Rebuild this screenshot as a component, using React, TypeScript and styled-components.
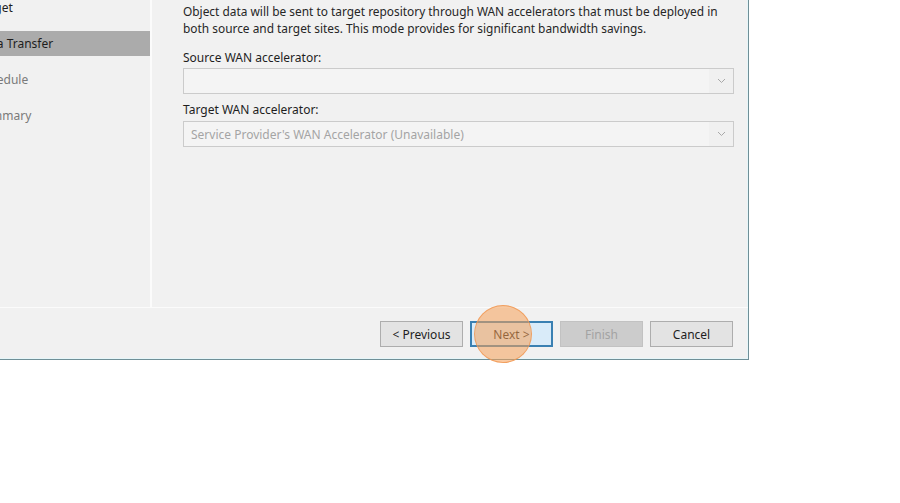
import React from "react";
import styled, { createGlobalStyle } from "styled-components";

const Global = createGlobalStyle`
  html, body { margin: 0; padding: 0; background: #ffffff; }
  body { font-family: "Noto Sans", "Segoe UI", "Liberation Sans", sans-serif; }
  #root { width: 900px; height: 503px; overflow: hidden; }
`;

const Viewport = styled.div`
  width: 900px;
  height: 503px;
  overflow: hidden;
  background: #ffffff;
`;

const Dialog = styled.div`
  margin-left: -30px;
  margin-top: -40px;
  width: 778px;
  height: 399px;
  background: #f1f1f1;
  border-right: 1px solid #6f8f97;
  border-bottom: 1px solid #6f8f97;
  box-shadow: inset -1px -1px 0 #e6f6f9;
  display: flex;
  flex-direction: column;
  font-size: 12px;
  color: #1e1e1e;
`;

const Body = styled.div`
  flex: 1;
  display: flex;
  border-bottom: 1px solid #fbfbfb;
`;

const Nav = styled.div`
  width: 180px;
  padding-top: 35px;
  border-right: 2px solid #fbfbfb;
  display: flex;
  flex-direction: column;
`;

const NavItem = styled.div<{ $active?: boolean; $pending?: boolean }>`
  height: 25px;
  margin-bottom: 11px;
  display: flex;
  align-items: center;
  padding-left: 7px;
  background: ${(p) => (p.$active ? "#ababab" : "transparent")};
  color: ${(p) => (p.$pending ? "#7a7a7a" : "#1e1e1e")};
  font-size: 12px;
`;

const Content = styled.div`
  flex: 1;
  padding: 43px 14px 0 31px;
  display: flex;
  flex-direction: column;
`;

const Description = styled.p`
  margin: 0;
  line-height: 17px;
  font-size: 11.9px;
  color: #262626;
`;

const FieldLabel = styled.div<{ $top: number }>`
  margin-top: ${(p) => p.$top}px;
  line-height: 16px;
  height: 16px;
  font-size: 12px;
  color: #1e1e1e;
`;

const Combo = styled.div<{ $gap: number }>`
  margin-top: ${(p) => p.$gap}px;
  height: 24px;
  border: 1px solid #cbcbcb;
  background: #f4f4f4;
  display: flex;
  align-items: center;
`;

const ComboText = styled.span`
  flex: 1;
  padding-left: 7px;
  color: #a4a4a4;
  font-size: 12px;
  white-space: nowrap;
`;

const ComboArrow = styled.span`
  width: 24px;
  height: 100%;
  display: flex;
  align-items: center;
  justify-content: center;
  background: #f0f0f0;
`;

const Footer = styled.div`
  height: 51px;
  box-sizing: border-box;
  display: flex;
  align-items: flex-start;
  justify-content: flex-end;
  gap: 7px;
  padding: 13px 15px 0 0;
  position: relative;
`;

const Button = styled.div<{ $variant?: "default" | "primary" | "disabled" }>`
  width: 81px;
  height: 24px;
  box-sizing: content-box;
  display: flex;
  align-items: center;
  justify-content: center;
  font-size: 12px;
  border: 1px solid
    ${(p) =>
      p.$variant === "primary" ? "#3a80b2" : p.$variant === "disabled" ? "#c2c2c2" : "#adadad"};
  background: ${(p) =>
    p.$variant === "primary" ? "#d9ebf9" : p.$variant === "disabled" ? "#cccccc" : "#e3e3e3"};
  color: ${(p) => (p.$variant === "disabled" ? "#a3a3a3" : "#1e1e1e")};
  ${(p) => (p.$variant === "primary" ? "box-shadow: inset 0 0 0 1px #3a80b2;" : "")}
`;

const ClickMarker = styled.div`
  position: absolute;
  left: 504px;
  top: -3px;
  width: 56px;
  height: 56px;
  border-radius: 50%;
  background: rgba(245, 160, 88, 0.55);
  border: 1.5px solid rgba(240, 150, 80, 0.8);
  pointer-events: none;
`;

const Chevron = () => (
  <svg width="9" height="6" viewBox="0 0 9 6">
    <path d="M1 1 L4.5 4.5 L8 1" fill="none" stroke="#a8a8a8" strokeWidth="1" />
  </svg>
);

export default function App() {
  return (
    <Viewport>
      <Global />
      <Dialog>
        <Body>
          <Nav>
            <NavItem>Target</NavItem>
            <NavItem $active>Data Transfer</NavItem>
            <NavItem $pending>Schedule</NavItem>
            <NavItem $pending>Summary</NavItem>
          </Nav>
          <Content>
            <Description>
              Object data will be sent to target repository through WAN accelerators that must be deployed in
              <br />
              both source and target sites. This mode provides for significant bandwidth savings.
            </Description>
            <FieldLabel $top={13}>Source WAN accelerator:</FieldLabel>
            <Combo $gap={2}>
              <ComboText />
              <ComboArrow>
                <Chevron />
              </ComboArrow>
            </Combo>
            <FieldLabel $top={8}>Target WAN accelerator:</FieldLabel>
            <Combo $gap={3}>
              <ComboText>Service Provider's WAN Accelerator (Unavailable)</ComboText>
              <ComboArrow>
                <Chevron />
              </ComboArrow>
            </Combo>
          </Content>
        </Body>
        <Footer>
          <Button>&lt; Previous</Button>
          <Button $variant="primary">Next &gt;</Button>
          <Button $variant="disabled">Finish</Button>
          <Button>Cancel</Button>
          <ClickMarker />
        </Footer>
      </Dialog>
    </Viewport>
  );
}
